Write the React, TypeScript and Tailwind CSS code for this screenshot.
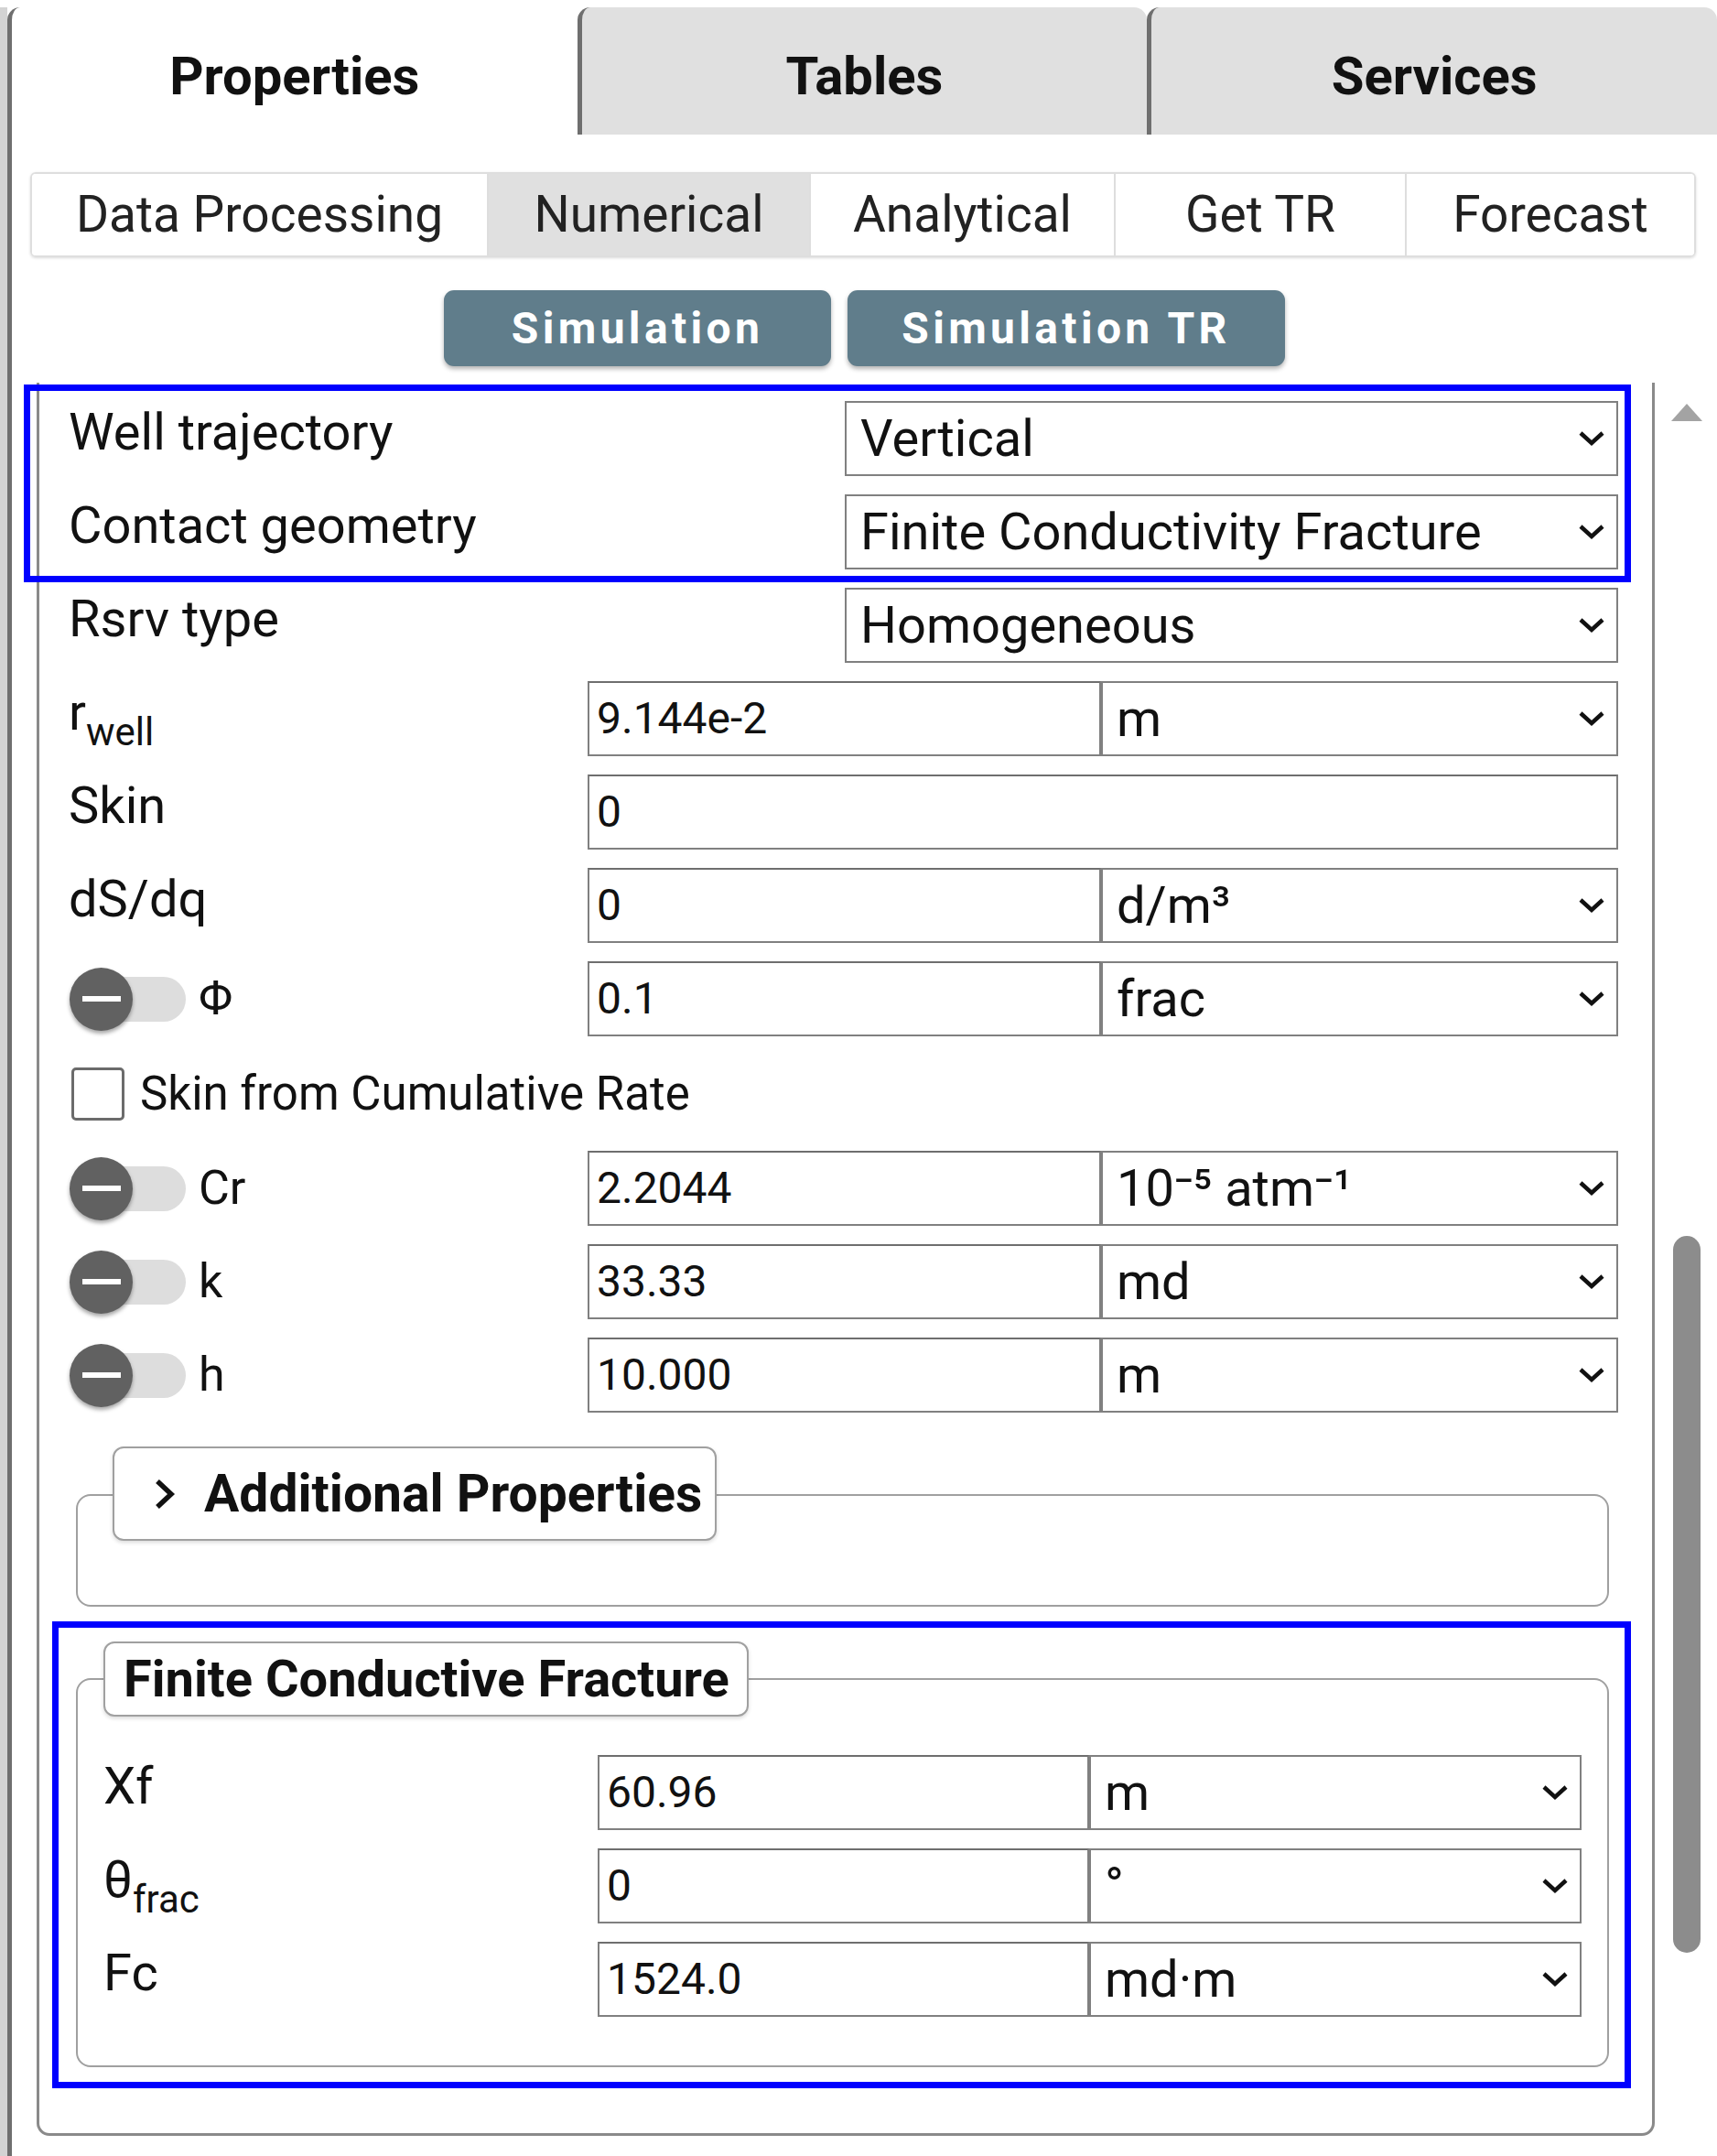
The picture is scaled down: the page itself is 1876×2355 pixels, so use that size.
import React from "react";

const Chevron = () => (
  <svg width="32" height="20" viewBox="0 0 32 20" className="shrink-0">
    <path d="M4 4 L16 15 L28 4" stroke="#111" strokeWidth="4.5" fill="none" />
  </svg>
);

function Select({ value, w }: { value: React.ReactNode; w: string }) {
  return (
    <div
      className={`${w} h-[82px] shrink-0 flex items-center justify-between border-2 border-[#808080] bg-white pl-[15px] pr-[11px] text-[56px] text-[#111] leading-none`}
    >
      <span className="whitespace-nowrap">{value}</span>
      <Chevron />
    </div>
  );
}

function Input({ value, w }: { value: string; w: string }) {
  return (
    <div
      className={`${w} h-[82px] shrink-0 flex items-center border-2 border-[#808080] border-t-[#6e6e6e] bg-white pl-[8px] text-[48px] text-[#111] leading-none`}
    >
      {value}
    </div>
  );
}

function Toggle() {
  return (
    <div className="relative w-[127px] h-[69px] flex items-center shrink-0">
      <div className="ml-[6px] w-[121px] h-[49px] rounded-full bg-[#dddddd]" />
      <div className="absolute left-0 top-0 w-[69px] h-[69px] rounded-full bg-[#616161] shadow-[0_3px_4px_rgba(0,0,0,0.35)] flex items-center justify-center">
        <div className="w-[42px] h-[6px] bg-white" />
      </div>
    </div>
  );
}

function Label({ children }: { children: React.ReactNode }) {
  return <div className="flex-1 pt-[7px] text-[56px] leading-[55px] text-[#111] whitespace-nowrap">{children}</div>;
}

function Sub({ base, sub }: { base: string; sub: string }) {
  return (
    <span>
      {base}
      <span className="text-[42px] relative top-[17px]">{sub}</span>
    </span>
  );
}

function SelectRow({ label, value }: { label: React.ReactNode; value: string }) {
  return (
    <div className="flex items-start h-[82px] pl-[32px] pr-[37px]">
      <Label>{label}</Label>
      <Select value={value} w="w-[845px]" />
    </div>
  );
}

function UnitRow({ label, value, unit }: { label: React.ReactNode; value: string; unit: React.ReactNode }) {
  return (
    <div className="flex items-start h-[82px] pl-[32px] pr-[37px]">
      <Label>{label}</Label>
      <Input value={value} w="w-[561px]" />
      <Select value={unit} w="w-[565px]" />
    </div>
  );
}

function ToggleRow({ label, value, unit }: { label: string; value: string; unit: React.ReactNode }) {
  return (
    <div className="flex items-center h-[82px] pl-[32px] pr-[37px]">
      <div className="flex-1 flex items-center gap-[14px] pl-[1px]">
        <Toggle />
        <span className="text-[52px] leading-none text-[#111]">{label}</span>
      </div>
      <Input value={value} w="w-[561px]" />
      <Select value={unit} w="w-[565px]" />
    </div>
  );
}

function FracRow({ label, value, unit }: { label: React.ReactNode; value: string; unit: string }) {
  return (
    <div className="flex items-start h-[82px]">
      <Label>{label}</Label>
      <Input value={value} w="w-[537px]" />
      <Select value={unit} w="w-[538px]" />
    </div>
  );
}

export default function App() {
  const tabs = ["Properties", "Tables", "Services"];
  const subTabs = [
    { name: "Data Processing", w: "w-[497px]" },
    { name: "Numerical", w: "w-[352px]", active: true },
    { name: "Analytical", w: "w-[333px]" },
    { name: "Get TR", w: "w-[318px]" },
    { name: "Forecast", w: "flex-1" },
  ];

  return (
    <div className="relative w-[1876px] h-[2355px] overflow-hidden bg-white pt-[8px] [font-family:Roboto,'Liberation_Sans',sans-serif]">
      <div className="flex h-full">
        {/* outer frame strip */}
        <div className="w-[8px] bg-[#d3d3d3] shrink-0" />

        <div className="flex-1 flex flex-col">
          {/* Top tabs */}
          <div className="flex h-[139px]">
            {tabs.map((t, i) => (
              <div
                key={t}
                className={`flex-1 flex items-center justify-center pt-[10px] rounded-t-[14px] border-l-[5px] border-[#6f6f6f] text-[58px] font-bold leading-none text-[#111] ${
                  i === 0 ? "bg-white" : "bg-[#e0e0e0]"
                }`}
              >
                {t}
              </div>
            ))}
          </div>

          {/* Body */}
          <div className="flex-1 flex flex-col border-l-[5px] border-[#6f6f6f]">
            {/* Sub tabs */}
            <div className="mt-[41px] ml-[20px] w-[1820px] h-[93px] flex rounded-[6px] border-2 border-[#dedede] shadow-[0_1px_3px_rgba(0,0,0,0.15)] overflow-hidden">
              {subTabs.map((s, i) => (
                <div
                  key={s.name}
                  className={`${s.w} flex items-center justify-center text-[55px] leading-none text-[#222] ${
                    i > 0 ? "border-l-2 border-[#dedede]" : ""
                  } ${s.active ? "bg-[#e0e0e0]" : "bg-white"}`}
                >
                  {s.name}
                </div>
              ))}
            </div>

            {/* Action buttons */}
            <div className="mt-[36px] flex justify-center gap-[18px]">
              <div className="w-[423px] h-[83px] rounded-[11px] bg-[#607d8b] shadow-[0_3px_5px_rgba(0,0,0,0.3)] flex items-center justify-center text-white font-bold text-[48px] tracking-[0.09em] leading-none">
                Simulation
              </div>
              <div className="w-[478px] h-[83px] rounded-[11px] bg-[#607d8b] shadow-[0_3px_5px_rgba(0,0,0,0.3)] flex items-center justify-center text-white font-bold text-[48px] tracking-[0.09em] leading-none">
                Simulation TR
              </div>
            </div>

            {/* Scrollable parameters area */}
            <div className="mt-[18px] flex flex-1">
              <div className="ml-[27px] w-[1768px] self-start border-x-[3px] border-b-[3px] border-[#8a8a8a] rounded-b-[14px] pt-[20px] pb-[72px] flex flex-col">
                <div className="flex flex-col gap-[20px]">
                  <SelectRow label="Well trajectory" value="Vertical" />
                  <SelectRow label="Contact geometry" value="Finite Conductivity Fracture" />
                  <SelectRow label="Rsrv type" value="Homogeneous" />
                  <UnitRow label={<Sub base="r" sub="well" />} value="9.144e-2" unit="m" />
                  <div className="flex items-start h-[82px] pl-[32px] pr-[37px]">
                    <Label>Skin</Label>
                    <Input value="0" w="w-[1126px]" />
                  </div>
                  <UnitRow label="dS/dq" value="0" unit="d/m³" />
                  <ToggleRow label="Φ" value="0.1" unit="frac" />
                  <div className="flex items-center h-[85px] pl-[35px] gap-[17px]">
                    <div className="w-[58px] h-[58px] border-[3px] border-[#6b6b6b] rounded-[5px] bg-white" />
                    <span className="text-[51px] leading-none text-[#111]">Skin from Cumulative Rate</span>
                  </div>
                  <ToggleRow label="Cr" value="2.2044" unit="10⁻⁵ atm⁻¹" />
                  <ToggleRow label="k" value="33.33" unit="md" />
                  <ToggleRow label="h" value="10.000" unit="m" />
                </div>

                {/* Additional Properties */}
                <div className="mt-[89px] ml-[40px] mr-[47px] h-[123px] border-2 border-[#a0a0a0] rounded-[16px]">
                  <div className="-mt-[54px] ml-[38px] w-[660px] h-[103px] rounded-[12px] border-2 border-[#a0a0a0] bg-white shadow-[0_2px_4px_rgba(0,0,0,0.15)] flex items-center gap-[30px] pl-[42px]">
                    <svg width="26" height="38" viewBox="0 0 26 38">
                      <path d="M5 5 L20 19 L5 33" stroke="#111" strokeWidth="5.5" fill="none" />
                    </svg>
                    <span className="text-[57px] font-bold leading-none text-[#111]">Additional Properties</span>
                  </div>
                </div>

                {/* Finite Conductive Fracture */}
                <div className="mt-[78px] ml-[40px] mr-[47px] border-2 border-[#a0a0a0] rounded-[16px] px-[28px] pb-[53px]">
                  <div className="-mt-[42px] w-[705px] h-[82px] rounded-[12px] border-2 border-[#a0a0a0] bg-white shadow-[0_2px_4px_rgba(0,0,0,0.15)] flex items-center pl-[20px]">
                    <span className="text-[56px] font-bold leading-none text-[#111]">Finite Conductive Fracture</span>
                  </div>
                  <div className="mt-[42px] flex flex-col gap-[20px]">
                    <FracRow label="Xf" value="60.96" unit="m" />
                    <FracRow label={<Sub base="θ" sub="frac" />} value="0" unit="°" />
                    <FracRow label="Fc" value="1524.0" unit="md·m" />
                  </div>
                </div>
              </div>

              {/* Scrollbar */}
              <div className="flex-1 flex flex-col items-center pt-[22px] pl-[2px]">
                <svg width="36" height="21" viewBox="0 0 36 21">
                  <polygon points="18,1 35,20 1,20" fill="#a3a3a3" />
                </svg>
                <div className="mt-[889px] w-[30px] h-[783px] rounded-full bg-[#8c8c8c]" />
              </div>
            </div>
          </div>
        </div>
      </div>

      {/* Annotation highlight boxes */}
      <div className="absolute left-[26px] top-[420px] w-[1756px] h-[216px] border-[7px] border-[#0000ff] pointer-events-none" />
      <div className="absolute left-[57px] top-[1771px] w-[1725px] h-[510px] border-[7px] border-[#0000ff] pointer-events-none" />
    </div>
  );
}
